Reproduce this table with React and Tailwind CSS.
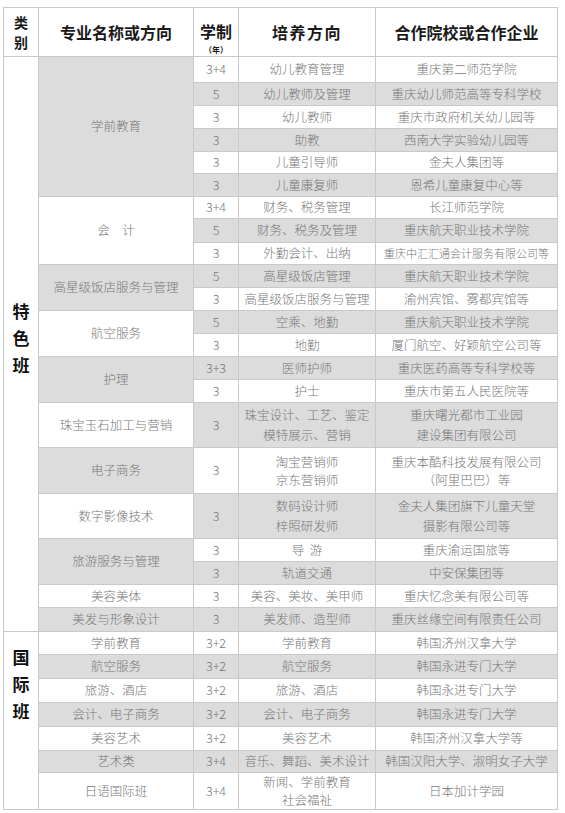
const special = [
  {
    name: "学前教育",
    rows: [
      { y: "3+4", dir: "幼儿教育管理", partner: "重庆第二师范学院", h: "h-[26px]" },
      { y: "5", dir: "幼儿教师及管理", partner: "重庆幼儿师范高等专科学校" },
      { y: "3", dir: "幼儿教师", partner: "重庆市政府机关幼儿园等" },
      { y: "3", dir: "助教", partner: "西南大学实验幼儿园等" },
      { y: "3", dir: "儿童引导师", partner: "金夫人集团等", h: "h-[22px]" },
      { y: "3", dir: "儿童康复师", partner: "恩希儿童康复中心等" },
    ],
  },
  {
    name: "会\u3000计",
    rows: [
      { y: "3+4", dir: "财务、税务管理", partner: "长江师范学院", h: "h-[22px]" },
      { y: "5", dir: "财务、税务及管理", partner: "重庆航天职业技术学院", h: "h-[24px]" },
      { y: "3", dir: "外勤会计、出纳", partner: "重庆中汇汇通会计服务有限公司等", small: true, h: "h-[22px]" },
    ],
  },
  {
    name: "高星级饭店服务与管理",
    rows: [
      { y: "5", dir: "高星级饭店管理", partner: "重庆航天职业技术学院" },
      { y: "3", dir: "高星级饭店服务与管理", partner: "渝州宾馆、雾都宾馆等" },
    ],
  },
  {
    name: "航空服务",
    rows: [
      { y: "5", dir: "空乘、地勤", partner: "重庆航天职业技术学院" },
      { y: "3", dir: "地勤", partner: "厦门航空、好颖航空公司等" },
    ],
  },
  {
    name: "护理",
    rows: [
      { y: "3+3", dir: "医师护师", partner: "重庆医药高等专科学校等" },
      { y: "3", dir: "护士", partner: "重庆市第五人民医院等" },
    ],
  },
  {
    name: "珠宝玉石加工与营销",
    rows: [
      {
        y: "3",
        dir: ["珠宝设计、工艺、鉴定", "模特展示、营销"],
        partner: ["重庆曙光都市工业园", "建设集团有限公司"],
        h: "h-[45px]",
        lead: "leading-[20px]",
      },
    ],
  },
  {
    name: "电子商务",
    rows: [
      {
        y: "3",
        dir: ["淘宝营销师", "京东营销师"],
        partner: ["重庆本酷科技发展有限公司", "（阿里巴巴）等"],
        h: "h-[46px]",
        lead: "leading-[18px]",
      },
    ],
  },
  {
    name: "数字影像技术",
    rows: [
      {
        y: "3",
        dir: ["数码设计师", "梓照研发师"],
        partner: ["金夫人集团旗下儿童天堂", "摄影有限公司等"],
        h: "h-[45px]",
        lead: "leading-[20px]",
      },
    ],
  },
  {
    name: "旅游服务与管理",
    rows: [
      { y: "3", dir: "导\u00a0\u00a0游", partner: "重庆渝运国旅等" },
      { y: "3", dir: "轨道交通", partner: "中安保集团等" },
    ],
  },
  {
    name: "美容美体",
    rows: [{ y: "3", dir: "美容、美妆、美甲师", partner: "重庆忆念美有限公司等" }],
  },
  {
    name: "美发与形象设计",
    rows: [{ y: "3", dir: "美发师、造型师", partner: "重庆丝缘空间有限责任公司", h: "h-[24px]" }],
  },
];

const intl = [
  { name: "学前教育", y: "3+2", dir: "学前教育", partner: "韩国济州汉拿大学" },
  { name: "航空服务", y: "3+2", dir: "航空服务", partner: "韩国永进专门大学", h: "h-[24px]" },
  { name: "旅游、酒店", y: "3+2", dir: "旅游、酒店", partner: "韩国永进专门大学", h: "h-[24px]" },
  { name: "会计、电子商务", y: "3+2", dir: "会计、电子商务", partner: "韩国永进专门大学", h: "h-[24px]" },
  { name: "美容艺术", y: "3+2", dir: "美容艺术", partner: "韩国济州汉拿大学等", h: "h-[24px]" },
  { name: "艺术类", y: "3+4", dir: "音乐、舞蹈、美术设计", partner: "韩国汉阳大学、淑明女子大学", h: "h-[22px]" },
  {
    name: "日语国际班",
    y: "3+4",
    dir: ["新闻、学前教育", "社会福祉"],
    partner: "日本加计学园",
    h: "h-[36px]",
    lead: "leading-[18px]",
  },
];

const cell = "border border-[#c9c9c9] text-center align-middle p-0";

const Lines = ({ value, lead }) =>
  Array.isArray(value) ? (
    <div className={lead}>
      {value.map((v) => (
        <div key={v}>{v}</div>
      ))}
    </div>
  ) : (
    value
  );

const Category = ({ chars, rowSpan, pad }) => (
  <td rowSpan={rowSpan} className={`${cell} bg-white`}>
    <div className={`flex flex-col items-center gap-[2px] text-[17px] font-bold leading-[25px] text-[#111] ${pad}`}>
      {chars.map((c) => (
        <span key={c}>{c}</span>
      ))}
    </div>
  </td>
);

export default function App() {
  let idx = 0;
  const specialRows = [];
  special.forEach((g, gi) => {
    g.rows.forEach((r, ri) => {
      const shaded = idx % 2 === 1;
      const bg = shaded ? "bg-[#dcdcdc]" : "bg-white";
      specialRows.push(
        <tr key={`${g.name}-${ri}`} className={r.h || "h-[23px]"}>
          {idx === 0 && <Category chars={["特", "色", "班"]} rowSpan={22} pad="pb-[14px]" />}
          {ri === 0 && (
            <td rowSpan={g.rows.length} className={`${cell} ${gi % 2 === 0 ? "bg-[#dcdcdc]" : "bg-white"}`}>
              {g.name}
            </td>
          )}
          <td className={`${cell} ${bg}`}>{r.y}</td>
          <td className={`${cell} ${bg}`}>
            <Lines value={r.dir} lead={r.lead} />
          </td>
          <td className={`${cell} ${bg} ${r.small ? "text-[11px]" : ""}`}>
            <Lines value={r.partner} lead={r.lead} />
          </td>
        </tr>
      );
      idx++;
    });
  });

  return (
    <div className="min-h-[813px] w-[565px] bg-white pl-[3px] pt-[7px]" style={{ fontFamily: '"Noto Sans CJK SC", "Liberation Sans", sans-serif' }}>
      <table className="w-[554px] table-fixed border-collapse text-[12.5px] font-light text-[#777]">
        <colgroup>
          <col className="w-[35px]" />
          <col className="w-[155px]" />
          <col className="w-[45px]" />
          <col className="w-[137px]" />
          <col className="w-[182px]" />
        </colgroup>
        <thead>
          <tr className="h-[49px] font-bold text-[#1a1a1a]">
            <th className={`${cell} bg-white`}>
              <div className="flex flex-col items-center text-[14px] leading-[20.5px]">
                <span>类</span>
                <span>别</span>
              </div>
            </th>
            <th className={`${cell} bg-white text-[16px]`}>专业名称或方向</th>
            <th className={`${cell} bg-white !align-top`}>
              <div className="flex flex-col items-center pt-[12px]">
                <span className="text-[16px] leading-[23.5px]">学制</span>
                <span className="text-[8px] leading-[12px]">（年）</span>
              </div>
            </th>
            <th className={`${cell} bg-white text-[16px] tracking-[1.5px]`}>培养方向</th>
            <th className={`${cell} bg-white text-[16px]`}>合作院校或合作企业</th>
          </tr>
        </thead>
        <tbody>
          {specialRows}
          {intl.map((r, i) => {
            const bg = i % 2 === 1 ? "bg-[#dcdcdc]" : "bg-white";
            return (
              <tr key={`intl-${r.name}`} className={r.h || "h-[23px]"}>
                {i === 0 && <Category chars={["国", "际", "班"]} rowSpan={7} pad="pb-[75px]" />}
                <td className={`${cell} ${bg}`}>{r.name}</td>
                <td className={`${cell} ${bg}`}>{r.y}</td>
                <td className={`${cell} ${bg}`}>
                  <Lines value={r.dir} lead={r.lead} />
                </td>
                <td className={`${cell} ${bg}`}>{r.partner}</td>
              </tr>
            );
          })}
        </tbody>
      </table>
    </div>
  );
}
